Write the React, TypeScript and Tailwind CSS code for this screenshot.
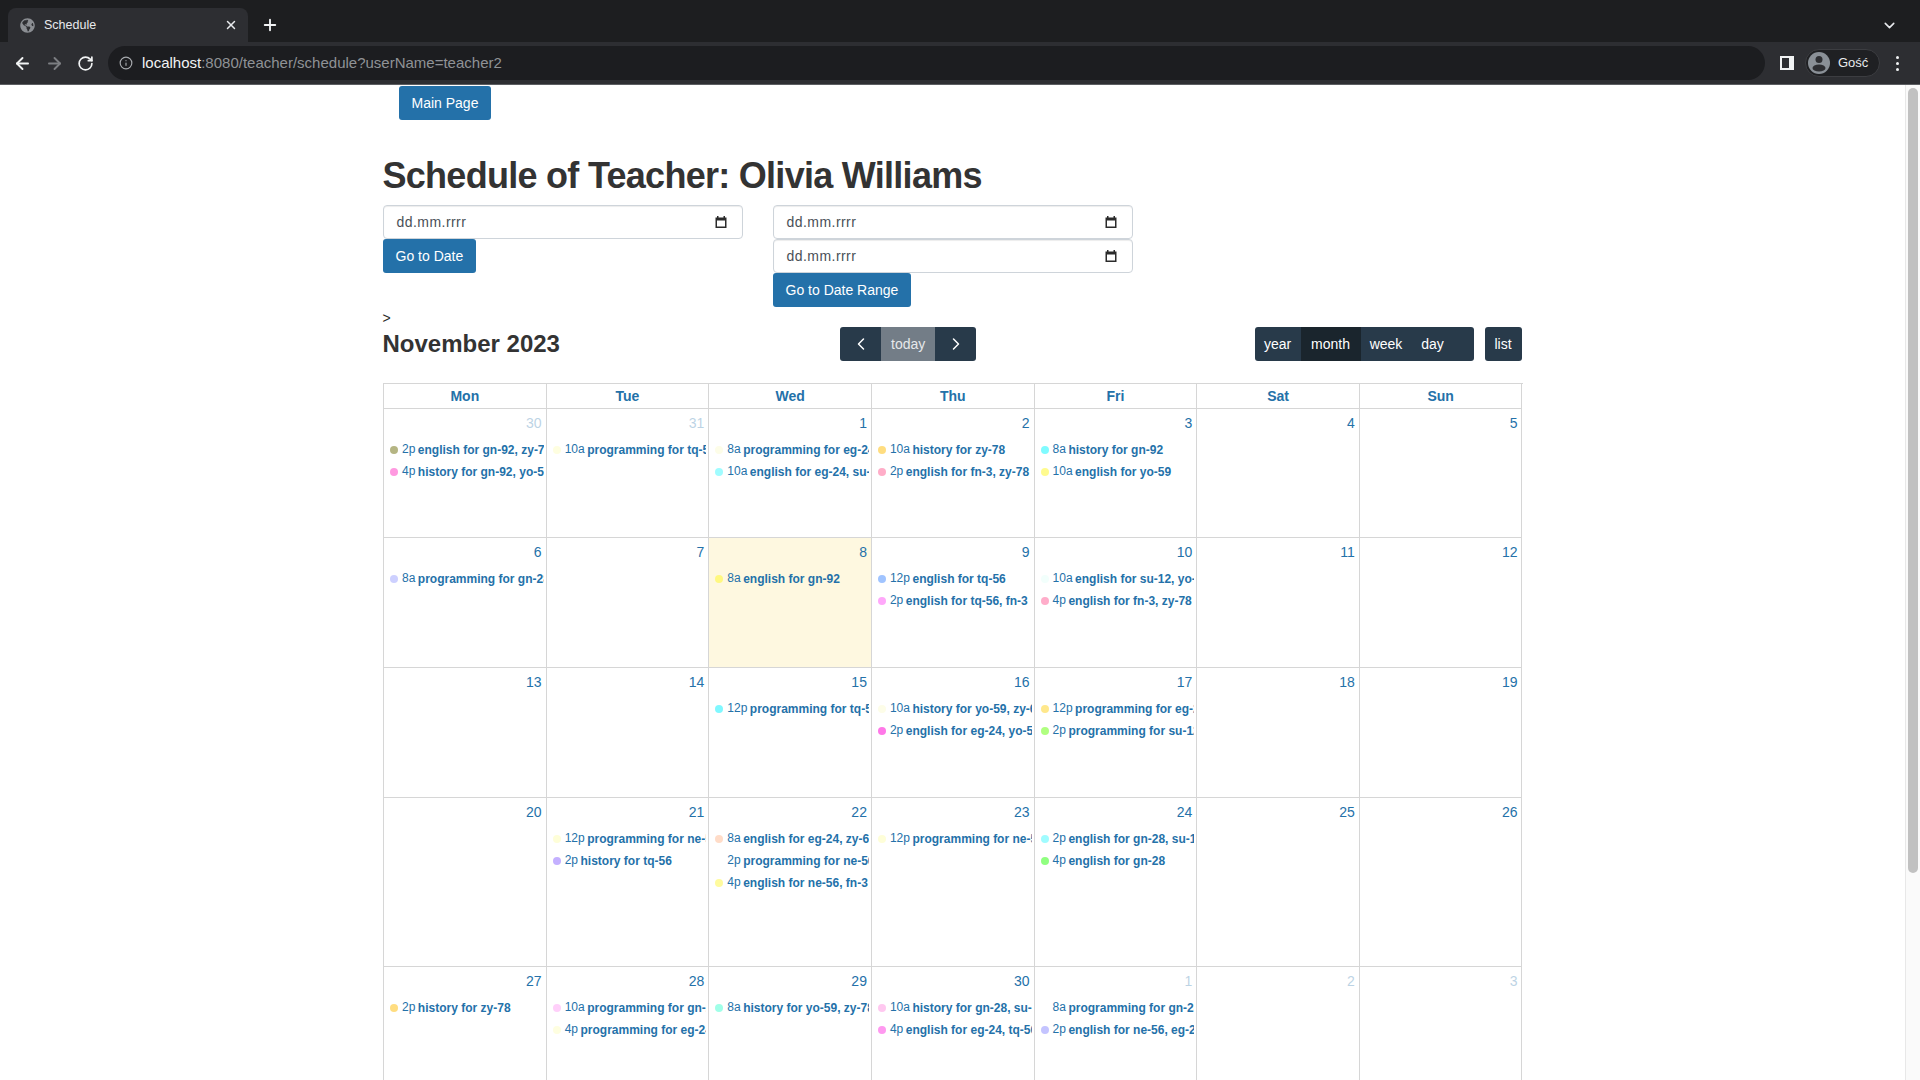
import { ArrowLeft, ArrowRight, ChevronDown, ChevronLeft, ChevronRight, Info, Plus, RotateCw, X } from 'lucide-react';
import { FaGlobeAmericas } from 'react-icons/fa';

interface IEvent {
  time: string;
  title: string;
  color: string;
}

interface IDay {
  day: number;
  muted?: boolean;
  today?: boolean;
  events?: IEvent[];
}

const WEEK_DAYS = ['Mon', 'Tue', 'Wed', 'Thu', 'Fri', 'Sat', 'Sun'];

const ev = (time: string, title: string, color: string): IEvent => ({ time, title, color });

const WEEKS: { height: string; days: IDay[] }[] = [
  {
    height: 'h-[129px]',
    days: [
      {
        day: 30,
        muted: true,
        events: [ev('2p', 'english for gn-92, zy-78', '#b5b583'), ev('4p', 'history for gn-92, yo-59', '#ff99e0')],
      },
      { day: 31, muted: true, events: [ev('10a', 'programming for tq-56', '#fefee0')] },
      {
        day: 1,
        events: [ev('8a', 'programming for eg-24', '#fdfde8'), ev('10a', 'english for eg-24, su-12', '#a0fcff')],
      },
      { day: 2, events: [ev('10a', 'history for zy-78', '#ffdd80'), ev('2p', 'english for fn-3, zy-78', '#ffadc8')] },
      { day: 3, events: [ev('8a', 'history for gn-92', '#80fbff'), ev('10a', 'english for yo-59', '#fffb8f')] },
      { day: 4 },
      { day: 5 },
    ],
  },
  {
    height: 'h-[130px]',
    days: [
      { day: 6, events: [ev('8a', 'programming for gn-28', '#cdd0ff')] },
      { day: 7 },
      { day: 8, today: true, events: [ev('8a', 'english for gn-92', '#fff880')] },
      { day: 9, events: [ev('12p', 'english for tq-56', '#a0c4ff'), ev('2p', 'english for tq-56, fn-3', '#ffa8fa')] },
      {
        day: 10,
        events: [ev('10a', 'english for su-12, yo-59', '#f2fffc'), ev('4p', 'english for fn-3, zy-78', '#ffadca')],
      },
      { day: 11 },
      { day: 12 },
    ],
  },
  {
    height: 'h-[130px]',
    days: [
      { day: 13 },
      { day: 14 },
      { day: 15, events: [ev('12p', 'programming for tq-56', '#80f8ff')] },
      {
        day: 16,
        events: [ev('10a', 'history for yo-59, zy-64', '#fdfde8'), ev('2p', 'english for eg-24, yo-59', '#ff78e8')],
      },
      {
        day: 17,
        events: [ev('12p', 'programming for eg-24', '#ffe88c'), ev('2p', 'programming for su-12', '#b0ff80')],
      },
      { day: 18 },
      { day: 19 },
    ],
  },
  {
    height: 'h-[169px]',
    days: [
      { day: 20 },
      { day: 21, events: [ev('12p', 'programming for ne-56', '#fefed8'), ev('2p', 'history for tq-56', '#c4b0ff')] },
      {
        day: 22,
        events: [
          ev('8a', 'english for eg-24, zy-64', '#ffdcc8'),
          ev('2p', 'programming for ne-56', '#ffffff'),
          ev('4p', 'english for ne-56, fn-3', '#fffb9e'),
        ],
      },
      { day: 23, events: [ev('12p', 'programming for ne-56', '#fefed8')] },
      { day: 24, events: [ev('2p', 'english for gn-28, su-12', '#a0fcff'), ev('4p', 'english for gn-28', '#90ff80')] },
      { day: 25 },
      { day: 26 },
    ],
  },
  {
    height: 'h-[130px]',
    days: [
      { day: 27, events: [ev('2p', 'history for zy-78', '#ffdd80')] },
      {
        day: 28,
        events: [ev('10a', 'programming for gn-28', '#ffd0fa'), ev('4p', 'programming for eg-24', '#fefee0')],
      },
      { day: 29, events: [ev('8a', 'history for yo-59, zy-78', '#a0ffe8')] },
      {
        day: 30,
        events: [ev('10a', 'history for gn-28, su-12', '#ffc8f0'), ev('4p', 'english for eg-24, tq-56', '#ff99f0')],
      },
      {
        day: 1,
        muted: true,
        events: [ev('8a', 'programming for gn-28', '#ffffff'), ev('2p', 'english for ne-56, eg-24', '#c4c4ff')],
      },
      { day: 2, muted: true },
      { day: 3, muted: true },
    ],
  },
];

const BrowserChrome = () => (
  <header className="shrink-0 text-white">
    <div className="flex h-[42px] items-end bg-[#1d1e20]">
      <div className="ml-2 flex h-[34px] w-[240px] items-center rounded-t-lg bg-[#2d2e32] pl-[12px] pr-[10px]">
        <FaGlobeAmericas className="size-[15px] text-[#8b8e93]" />
        <span className="ml-[9px] flex-1 text-[12.5px] text-[#e8eaed]">Schedule</span>
        <X className="size-[14px] text-[#e8eaed]" strokeWidth={2.5} />
      </div>
      <div className="ml-[13px] flex h-[34px] items-center">
        <Plus className="size-[18px] text-[#f1f3f4]" strokeWidth={2.5} />
      </div>
      <div className="flex h-[34px] flex-1 items-center justify-end pr-[22px]">
        <ChevronDown className="size-[17px] text-[#e8eaed]" strokeWidth={2.2} />
      </div>
    </div>
    <div className="flex h-[42px] items-center bg-[#2d2e32]">
      <div className="flex w-[108px] items-center pl-[13px]">
        <ArrowLeft className="size-[19px] text-[#f1f3f4]" strokeWidth={2.4} />
        <ArrowRight className="ml-[13px] size-[19px] text-[#7c7e82]" strokeWidth={2.4} />
        <RotateCw className="ml-[13px] size-[17px] text-[#f1f3f4]" strokeWidth={2.4} />
      </div>
      <div className="flex h-[34px] w-[1657px] items-center rounded-full bg-[#1c1d20] pl-[11px] text-[15px]">
        <Info className="size-[14px] text-[#a8abaf]" />
        <span className="ml-[9px] text-[#f1f3f4]">localhost</span>
        <span className="text-[#8f9296]">:8080/teacher/schedule?userName=teacher2</span>
      </div>
      <svg className="ml-[15px] size-[14px]" viewBox="0 0 14 14">
        <rect width="14" height="14" fill="#f1f3f4" />
        <rect x="2" y="2" width="7" height="10" fill="#2d2e32" />
      </svg>
      <div className="ml-[11px] flex h-[28px] w-[75px] items-center rounded-full border border-[#3c3d41] bg-[#1f2023] pl-[2px]">
        <svg className="size-[22px]" viewBox="0 0 22 22">
          <circle cx="11" cy="11" r="11" fill="#8a9097" />
          <circle cx="11" cy="7.5" r="3.5" fill="#2d2e32" />
          <ellipse cx="11" cy="16" rx="6.5" ry="3.6" fill="#2d2e32" />
        </svg>
        <span className="ml-2 text-[13px] text-[#e8eaed]">Gość</span>
      </div>
      <div className="ml-[16px] flex flex-col gap-[3px]">
        <span className="size-[3px] rounded-full bg-[#f1f3f4]" />
        <span className="size-[3px] rounded-full bg-[#f1f3f4]" />
        <span className="size-[3px] rounded-full bg-[#f1f3f4]" />
      </div>
    </div>
    <div className="h-px bg-[#5c5e62]" />
  </header>
);

const DateField = () => (
  <div className="flex h-[34px] w-[360px] items-center justify-between rounded border border-[#ced4da] bg-white pl-[13px] pr-[14px] text-sm tracking-[0.45px] text-[#495057] shadow-[inset_0_1px_1px_rgba(0,0,0,0.075)]">
    <span>dd.mm.rrrr</span>
    <svg className="size-[14px]" viewBox="0 0 14 14">
      <path d="M3 1h1.5v1.5h5V1H11v1.5h1.5V13h-11V2.5H3zM3 5.5V11.5h8V5.5z" fill="#2b2b2b" fillRule="evenodd" />
    </svg>
  </div>
);

const BlueButton = ({ label, className = '' }: { label: string; className?: string }) => (
  <button className={`h-[34px] rounded-[3px] bg-[#2471a9] px-[13px] text-sm text-white ${className}`}>{label}</button>
);

const CalendarToolbar = () => (
  <div className="mb-[22px] flex h-[34px] w-[1139px] items-center justify-between">
    <h2 className="mr-[2px] text-[24px] font-bold leading-[34px] text-[#333333]">November 2023</h2>
    <div className="flex h-[34px] overflow-hidden rounded-[3px] text-sm text-white">
      <button className="flex w-[41px] items-center justify-center bg-[#283a4a]">
        <ChevronLeft className="size-[20px]" strokeWidth={1.8} />
      </button>
      <button className="w-[54px] bg-[#737d87] text-[#e6e8ea]">today</button>
      <button className="flex w-[41px] items-center justify-center bg-[#283a4a]">
        <ChevronRight className="size-[20px]" strokeWidth={1.8} />
      </button>
    </div>
    <div className="flex h-[34px] gap-[11px] text-sm text-white">
      <div className="flex overflow-hidden rounded-[3px] bg-[#283a4a]">
        <button className="w-[46px]">year</button>
        <button className="w-[60px] bg-[#1a252d]">month</button>
        <button className="w-[51px]">week</button>
        <button className="w-[42px]">day</button>
        <span className="w-[20px]" />
      </div>
      <button className="w-[37px] rounded-[3px] bg-[#283a4a]">list</button>
    </div>
  </div>
);

const DayCell = ({ day, muted, today, events = [] }: IDay) => (
  <div className={`min-w-0 border-r border-b border-[#d6d6d6] ${today ? 'bg-[#fef8e0]' : ''}`}>
    <div className={`pr-[4px] pt-[4px] text-right text-sm leading-5 text-[#2471a9] ${muted ? 'opacity-30' : ''}`}>
      {day}
    </div>
    <div className="mt-[6px] pl-[6px] pr-[2px]">
      {events.map((event) => (
        <div key={event.title + event.time} className="flex h-[22px] items-center overflow-hidden whitespace-nowrap text-xs text-[#2471a9]">
          <span className="size-2 shrink-0 rounded-full" style={{ backgroundColor: event.color }} />
          <span className="ml-[4px] -translate-y-px">{event.time}</span>
          <span className="ml-[2.5px] font-bold">{event.title}</span>
        </div>
      ))}
    </div>
  </div>
);

const Calendar = () => (
  <div className="ml-[0.5px] border-l border-t border-[#d6d6d6]">
    <div className="grid h-[25px] grid-cols-7">
      {WEEK_DAYS.map((name) => (
        <div key={name} className="border-r border-b border-[#d6d6d6] text-center text-sm font-bold leading-6 text-[#2471a9]">
          {name}
        </div>
      ))}
    </div>
    {WEEKS.map((week) => (
      <div key={week.days[0].day} className={`grid grid-cols-7 ${week.height}`}>
        {week.days.map((item) => (
          <DayCell key={`${item.day}-${item.muted}`} {...item} />
        ))}
      </div>
    ))}
  </div>
);

const App = () => (
  <div className="flex h-screen flex-col overflow-hidden bg-white font-['Liberation_Sans',Arial,sans-serif]">
    <BrowserChrome />
    <div className="flex min-h-0 flex-1">
      <main className="min-w-0 flex-1 overflow-hidden">
        <div className="mx-auto w-[1140px]">
          <BlueButton label="Main Page" className="ml-[16px] mt-px block" />
          <h1 className="mt-[31px] h-[54px] text-[36px] font-bold leading-[50px] tracking-[-0.72px] text-[#333333]">
            Schedule of Teacher: Olivia Williams
          </h1>
          <div className="flex gap-[30px]">
            <div className="flex flex-col items-start">
              <DateField />
              <BlueButton label="Go to Date" />
            </div>
            <div className="flex flex-col items-start">
              <DateField />
              <DateField />
              <BlueButton label="Go to Date Range" />
            </div>
          </div>
          <p className="h-5 pt-px text-sm leading-5 text-[#2b2b2b]">&gt;</p>
          <CalendarToolbar />
          <Calendar />
        </div>
      </main>
      <aside className="w-[15px] shrink-0 border-l border-[#e8e8e8] bg-[#fafafa] px-[2px] pt-[3px]">
        <div className="h-[785px] rounded-full bg-[#c1c1c1]" />
      </aside>
    </div>
  </div>
);

export default App;
